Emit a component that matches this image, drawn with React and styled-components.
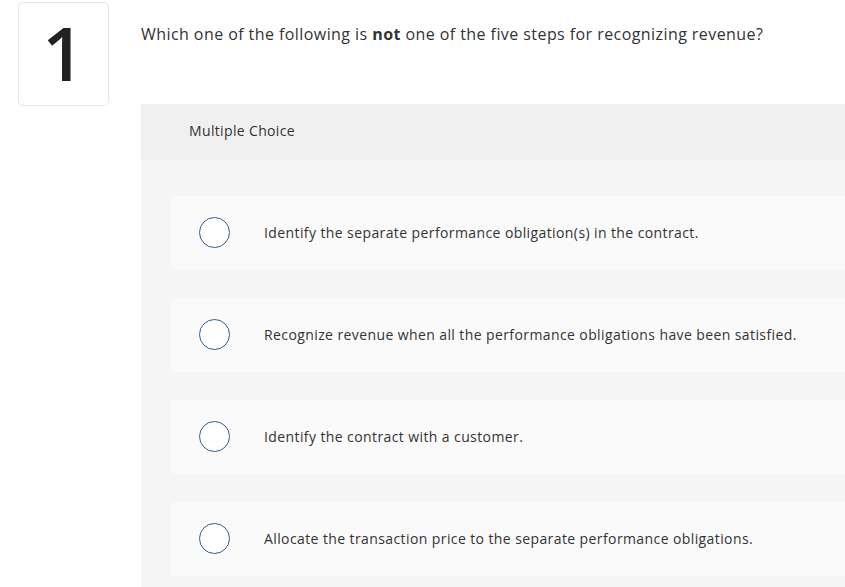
import React from "react";
import styled, { createGlobalStyle } from "styled-components";

const Global = createGlobalStyle`
  html, body { margin: 0; padding: 0; background: #fff; overflow: hidden; }
  body { font-family: "Open Sans", Lato, Arial, sans-serif; color: #333; }
`;

const Page = styled.div`
  display: flex;
  align-items: flex-start;
  padding: 2px 0 0 18px;
  gap: 32px;
  width: 845px;
  box-sizing: border-box;
`;

const NumberBox = styled.div`
  flex: none;
  width: 91px;
  height: 104px;
  box-sizing: border-box;
  border: 1px solid #e6e6e6;
  border-radius: 5px;
  display: flex;
  align-items: center;
  justify-content: center;
  font-family: "Open Sans", Lato, sans-serif;
  font-size: 74px;
  font-weight: 600;
  color: #222;
  line-height: 1;
  padding-bottom: 2px;
`;

const Main = styled.div`
  flex: 1;
  min-width: 0;
  display: flex;
  flex-direction: column;
`;

const Question = styled.p`
  margin: 20px 0 0 0;
  font-size: 16px;
  line-height: 24px;
  letter-spacing: 0.43px;
  color: #333;
  height: 82px;
`;

const Panel = styled.section`
  background: #f5f5f5;
  min-height: 500px;
`;

const PanelHeader = styled.div`
  background: #f0f0f0;
  height: 56px;
  display: flex;
  align-items: center;
  padding: 0 0 3px 48px;
  box-sizing: border-box;
  font-size: 14px;
  letter-spacing: 0.35px;
  color: #333;
`;

const Options = styled.div`
  display: flex;
  flex-direction: column;
  gap: 28px;
  padding: 36px 0 0 30px;
`;

const Option = styled.label`
  display: flex;
  align-items: center;
  height: 74px;
  box-sizing: border-box;
  background: #fafafa;
  border-radius: 4px 0 0 4px;
  padding: 0 0 2px 28px;
  font-size: 14px;
  letter-spacing: 0.4px;
  color: #333;
`;

const Radio = styled.span`
  flex: none;
  width: 31px;
  height: 31px;
  box-sizing: border-box;
  border: 1.5px solid #2f5f8f;
  border-radius: 50%;
  background: #fff;
  margin-right: 34px;
`;

const choices = [
  "Identify the separate performance obligation(s) in the contract.",
  "Recognize revenue when all the performance obligations have been satisfied.",
  "Identify the contract with a customer.",
  "Allocate the transaction price to the separate performance obligations.",
];

export default function App() {
  return (
    <>
      <Global />
      <Page>
        <NumberBox>1</NumberBox>
        <Main>
          <Question>
            Which one of the following is <b>not</b> one of the five steps for recognizing revenue?
          </Question>
          <Panel>
            <PanelHeader>Multiple Choice</PanelHeader>
            <Options>
              {choices.map((c) => (
                <Option key={c}>
                  <Radio />
                  {c}
                </Option>
              ))}
            </Options>
          </Panel>
        </Main>
      </Page>
    </>
  );
}
